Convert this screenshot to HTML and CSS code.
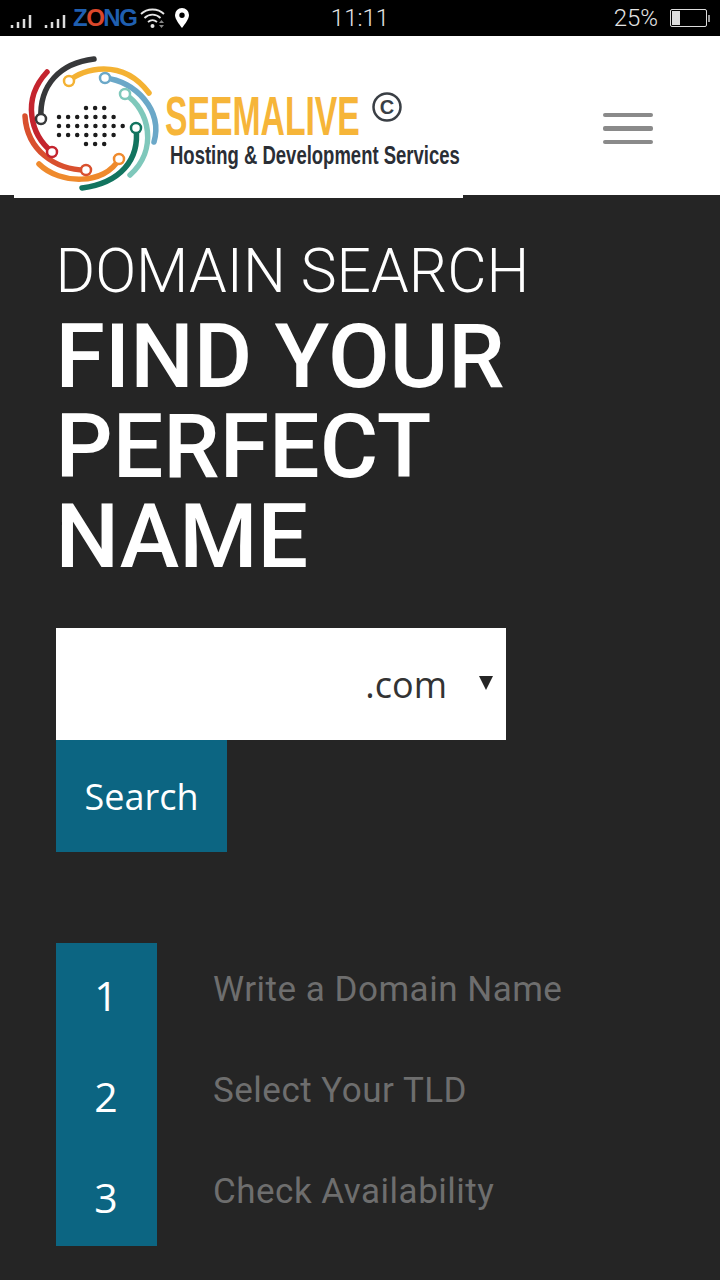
FILE: index.html
```html
<!DOCTYPE html>
<html lang="en">
  <head>
    <meta charset="UTF-8" />
    <meta name="viewport" content="width=device-width, initial-scale=1.0" />
    <title>Domain Search - Seemalive</title>
    <link rel="stylesheet" href="styles.css">
  </head>
  <body>
    <div class="status-bar">
      <div class="status-left">
        <svg class="signal" width="60" height="16" viewBox="0 0 60 16">
          <path d="M2 16v-3M8 16v-6M14 16v-9M20 16v-13M36 16v-3M42 16v-6M48 16v-9M54 16v-13" stroke="#dcdcdc" stroke-width="2.500" />
        </svg>
        <span class="carrier">Z<span class="carrier-o">O</span>NG</span>
        <svg class="wifi" width="28" height="22" viewBox="0 0 28 22">
          <g fill="none" stroke="#e6e6e6" stroke-width="1.800">
            <path d="M1 7C7 1 18 1 24 7" />
            <path d="M4.500 11C9 6.500 16 6.500 20.500 11" />
            <path d="M8 15C11 12.500 14 12.500 17 15" />
          </g>
          <circle cx="12.500" cy="19" r="2" fill="#e6e6e6" />
          <path d="M19 16l2.500-3 2.500 3zM19 18l2.500 3 2.500-3z" fill="#888" />
        </svg>
        <svg class="pin" width="14" height="20" viewBox="0 0 14 20">
          <path fill-rule="evenodd" d="M7 0a7 7 0 0 1 7 7c0 4-4 9-7 13C4 16 0 11 0 7a7 7 0 0 1 7-7zM7 4.500a2.700 2.700 0 1 0 0 5.400 2.700 2.700 0 0 0 0-5.400z" fill="#fff" />
        </svg>
      </div>
      <span class="clock">11:11</span>
      <div class="status-right">
        <span class="battery-level">25%</span>
        <div class="battery"><div class="battery-fill"></div></div>
        <div class="battery-tip"></div>
      </div>
    </div>

    <header class="site-header">
      <svg class="logo" width="449" height="153" viewBox="14 45 449 153">
        <g transform="translate(10 45)" fill="none" stroke-width="5.500" stroke-linecap="round">
          <path d="M31 74C29 40 50 18 84 14" stroke="#37383a" />
          <path d="M59 36C72 24 112 12 139 48" stroke="#f4b233" />
          <path d="M95 33C125 36 153 65 144 97" stroke="#6ba8c8" />
          <path d="M115 49C140 65 148 105 120 130" stroke="#7fc8bb" />
          <path d="M126 83C130 115 110 138 72 143" stroke="#12745f" />
          <path d="M109 114C95 140 50 140 29 119" stroke="#ef8a2d" />
          <path d="M76 125C45 125 17 105 15 71" stroke="#d9502e" />
          <path d="M42 107C21 90 11 55 37 27" stroke="#c4242e" />
          <g fill="#fff" stroke-width="2.500">
            <circle cx="31" cy="74" r="5" stroke="#37383a" />
            <circle cx="59" cy="36" r="5" stroke="#f4b233" />
            <circle cx="95" cy="33" r="5" stroke="#6ba8c8" />
            <circle cx="115" cy="49" r="5" stroke="#7fc8bb" />
            <circle cx="126" cy="83" r="5" stroke="#12745f" />
            <circle cx="109" cy="114" r="5" stroke="#ef8a2d" />
            <circle cx="76" cy="125" r="5" stroke="#d9502e" />
            <circle cx="42" cy="107" r="5" stroke="#c4242e" />
          </g>
          <g stroke="#1c1c1c" stroke-width="4.500" stroke-dasharray="0 9.100">
            <path d="M76 63H98" />
            <path d="M49 72H108" />
            <path d="M49 81H117" />
            <path d="M49 90H108" />
            <path d="M76 99H98" />
          </g>
        </g>
        <text class="logo-name" transform="translate(165 135) scale(0.613 1)">SEEMALIVE</text>
        <text class="logo-tagline" transform="translate(170 164) scale(0.74 1)">Hosting &amp; Development Services</text>
        <circle cx="387" cy="107" r="13.500" fill="none" stroke="#3a3f45" stroke-width="2.500" />
        <text class="logo-mark" x="387" y="114" text-anchor="middle">C</text>
      </svg>
      <div class="menu-toggle">
        <span class="menu-bar"></span>
        <span class="menu-bar"></span>
        <span class="menu-bar"></span>
      </div>
    </header>

    <main class="domain-search">
      <p class="eyebrow">DOMAIN SEARCH</p>
      <h1 class="main-title">FIND YOUR PERFECT NAME</h1>
      <form class="search-form">
        <div class="domain-field">
          <span class="tld">.com</span>
          <span class="tld-arrow"></span>
        </div>
        <button type="button" class="search-button">Search</button>
      </form>
      <ol class="steps">
        <li class="step"><span class="step-number">1</span><span class="step-label">Write a Domain Name</span></li>
        <li class="step"><span class="step-number">2</span><span class="step-label">Select Your TLD</span></li>
        <li class="step"><span class="step-number">3</span><span class="step-label">Check Availability</span></li>
      </ol>
    </main>
  </body>
</html>
```

FILE: styles.css
```css
body {
  margin: 0;
  background: #252525;
  font-family: Roboto, "Liberation Sans", sans-serif;
}
.status-bar {
  height: 36px;
  background: #000;
  display: grid;
  grid-template-columns: 1fr auto 1fr;
  align-items: center;
  color: #e4e4e4;
}
.status-left {
  display: flex;
  align-items: center;
  padding-left: 10px;
}
.signal {
  margin-top: 4px;
}
.carrier {
  margin-left: 3px;
  width: 62px;
  font-family: "Liberation Sans", sans-serif;
  font-weight: 700;
  font-size: 24px;
  letter-spacing: -1.500px;
  color: #1f5fb0;
}
.carrier-o {
  color: #d9472b;
}
.wifi {
  margin-left: 5px;
}
.pin {
  margin-left: 7px;
}
.clock {
  font-size: 24px;
  font-weight: 300;
}
.status-right {
  display: flex;
  align-items: center;
  justify-content: flex-end;
  padding-right: 10px;
}
.battery-level {
  font-size: 24px;
  font-weight: 300;
  margin-right: 12px;
}
.battery {
  width: 33px;
  height: 14px;
  padding: 1px;
  border: 1.500px solid #ddd;
  border-radius: 2px;
}
.battery-fill {
  width: 8px;
  height: 100%;
  background: #ddd;
}
.battery-tip {
  width: 2px;
  height: 7px;
  margin-left: 1px;
  background: #999;
}
.site-header {
  height: 159px;
  background: #fff;
  display: flex;
  justify-content: space-between;
  align-items: center;
}
.logo {
  display: block;
  align-self: flex-end;
  margin-left: 14px;
  margin-bottom: -3px;
  background: #fff;
}
.logo-name {
  font-family: "Liberation Sans", sans-serif;
  font-weight: 700;
  font-size: 55px;
  fill: #f6b539;
}
.logo-tagline {
  font-family: "Liberation Sans", sans-serif;
  font-weight: 700;
  font-size: 25px;
  fill: #2a2e35;
}
.logo-mark {
  font-family: "Liberation Sans", sans-serif;
  font-weight: 700;
  font-size: 20px;
  fill: #3a3f45;
}
.menu-toggle {
  display: flex;
  flex-direction: column;
  gap: 9px;
  margin-top: 26px;
  margin-right: 67px;
}
.menu-bar {
  display: block;
  width: 50px;
  height: 4.500px;
  border-radius: 2px;
  background: #8a8a8a;
}
.domain-search {
  padding: 42px 55.500px 0;
}
.eyebrow {
  margin: 0;
  font-size: 60.500px;
  line-height: 70px;
  font-weight: 300;
  color: #fff;
}
.main-title {
  margin: 5px 0 0;
  width: 480px;
  font-size: 89.600px;
  line-height: 90px;
  font-weight: 500;
  color: #fff;
}
.search-form {
  margin: 46px 0 0 0.500px;
}
.domain-field {
  width: 450px;
  height: 112px;
  background: #fff;
  display: flex;
  justify-content: flex-end;
  align-items: center;
  font-family: "Open Sans", sans-serif;
  font-size: 36px;
  color: #333;
}
.tld {
  margin-right: 32px;
}
.tld-arrow {
  margin-right: 13px;
  margin-bottom: 2px;
  border-left: 7px solid transparent;
  border-right: 7px solid transparent;
  border-top: 14px solid #252525;
}
.search-button {
  display: block;
  width: 171px;
  height: 112px;
  padding: 0;
  border: 0;
  background: #0c6582;
  font-family: "Open Sans", sans-serif;
  font-size: 36px;
  color: #fff;
}
.steps {
  list-style: none;
  margin: 91px 0 0 0.500px;
  padding: 0;
}
.step {
  display: flex;
  height: 101px;
  align-items: center;
}
.step-number {
  width: 100px;
  padding-right: 1px;
  height: 101px;
  line-height: 104px;
  background: #0c6582;
  text-align: center;
  font-family: "Open Sans", sans-serif;
  font-size: 41px;
  color: #fff;
}
.step-label {
  margin-left: 56px;
  margin-bottom: 8px;
  font-size: 35px;
  letter-spacing: 0.500px;
  color: #6e6e6e;
}
```
